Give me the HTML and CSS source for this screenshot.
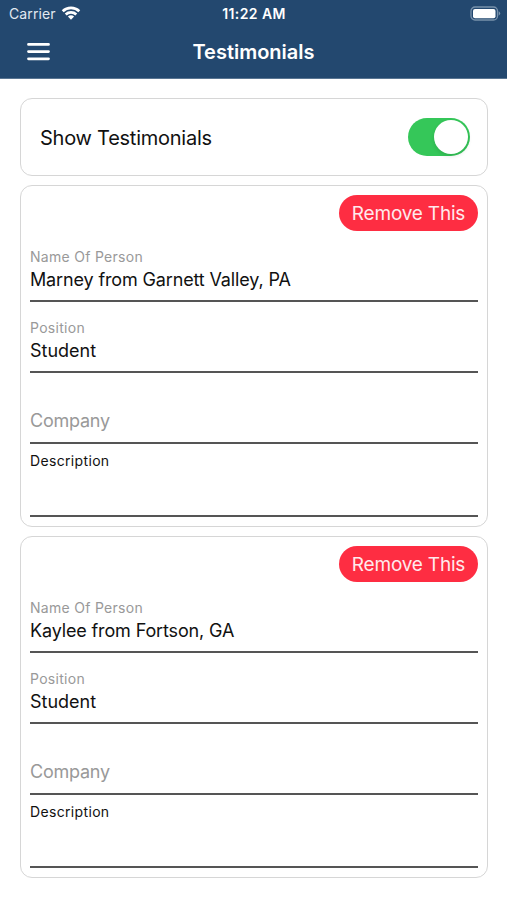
FILE: index.html
```html
<!DOCTYPE html>
<html lang="en">
<head>
<meta charset="utf-8">
<title>Testimonials</title>
<link rel="stylesheet" href="styles.css">
</head>
<body>
<header class="header">
  <div class="status">
    <div class="carrier"><span>Carrier</span>
      <svg class="wifi" width="20" height="14" viewBox="0 0 20 14"><g fill="none" stroke="#fff" stroke-width="2.7"><path d="M1.7 5.3a12 12 0 0 1 16.6 0"/><path d="M4.7 8.5a7.7 7.7 0 0 1 10.6 0"/></g><path fill="#fff" d="M10 13.7 6.9 10.6a4.5 4.5 0 0 1 6.2 0z"/></svg>
    </div>
    <span class="time">11:22 AM</span>
    <svg class="battery" width="31" height="15" viewBox="0 0 31 15"><rect x="1" y="1" width="26.5" height="13" rx="4" fill="none" stroke="#7891ab" stroke-width="1.3"/><rect x="3" y="3" width="22.5" height="9.3" rx="2" fill="#fff"/><path d="M28.7 5.3q3 2.2 0 4.4z" fill="#7e96af"/></svg>
  </div>
  <div class="nav">
    <svg class="menu" width="23" height="18" viewBox="0 0 23 18"><path d="M1.5 1.4h20M1.5 8.6h20M1.5 15.8h20" stroke="#fff" stroke-width="2.8" stroke-linecap="round"/></svg>
    <h1 class="title">Testimonials</h1>
  </div>
</header>
<main class="content">
  <section class="card toggle-card">
    <span class="toggle-label">Show Testimonials</span>
    <span class="switch"><span class="knob"></span></span>
  </section>
  <section class="card">
    <button class="remove">Remove This</button>
    <div class="field"><span class="label">Name Of Person</span><span class="value">Marney from Garnett Valley, PA</span></div>
    <div class="field"><span class="label">Position</span><span class="value short">Student</span></div>
    <div class="field"><span class="placeholder">Company</span></div>
    <div class="field description"><span class="description-label">Description</span></div>
  </section>
  <section class="card">
    <button class="remove">Remove This</button>
    <div class="field"><span class="label">Name Of Person</span><span class="value">Kaylee from Fortson, GA</span></div>
    <div class="field"><span class="label">Position</span><span class="value short">Student</span></div>
    <div class="field"><span class="placeholder">Company</span></div>
    <div class="field description"><span class="description-label">Description</span></div>
  </section>
</main>
</body>
</html>
```
FILE: styles.css
```css
* { box-sizing: border-box; }
body { margin: 0; height: 900px; background: #fff; color: #111; font-family: Inter, "Liberation Sans", sans-serif; overflow: hidden; white-space: nowrap; }
.header { height: 79px; background: #23486f; color: #fff; border-bottom: 1px solid #597592; }
.status { height: 27px; display: grid; grid-template-columns: 1fr auto 1fr; align-items: center; padding: 0 6px 0 9px; }
.carrier { display: flex; align-items: center; gap: 5px; font-size: 14px; letter-spacing: .1px; color: #e2e9f1; }
.wifi { margin-top: -2px; }
.time { font-size: 14px; font-weight: 600; letter-spacing: .4px; margin-right: 2px; }
.battery { justify-self: end; }
.nav { height: 51px; display: grid; grid-template-columns: 80px 1fr 80px; align-items: center; }
.menu { margin: 0 0 1px 27px; }
.title { margin: 0; text-align: center; font-size: 20px; line-height: 24px; font-weight: 600; margin-top: -1px; }
.content { padding: 19px 19px 0 20px; display: flex; flex-direction: column; gap: 9px; }
.card { height: 342px; border: 1px solid #d6d6d6; border-radius: 12px; padding: 9px; display: flex; flex-direction: column; }
.toggle-card { height: 78px; flex-direction: row; align-items: center; justify-content: space-between; padding: 0 17px 0 19px; }
.toggle-label { font-size: 20px; letter-spacing: -.25px; margin-top: 1px; }
.switch { width: 62px; height: 38px; border-radius: 19px; background: #35c759; padding: 2px; display: flex; justify-content: flex-end; }
.knob { width: 34px; height: 34px; border-radius: 50%; background: #fff; box-shadow: 0 2px 4px rgba(0,0,0,.12); }
.remove { align-self: flex-end; width: 139px; height: 36px; flex: none; border: 0; border-radius: 18px; padding: 0; background: #fe2d42; color: #ffe9ec; font: 19px Inter, "Liberation Sans", sans-serif; letter-spacing: -.2px; }
.field { height: 71px; flex: none; border-bottom: 2px solid #555; display: flex; flex-direction: column; align-items: flex-start; }
.label { margin-top: 17px; font-size: 14px; line-height: 18px; letter-spacing: .29px; color: #999; }
.value { margin-top: 1px; font-size: 18px; line-height: 26px; letter-spacing: -.14px; color: #111; }
.short { letter-spacing: 0; }
.placeholder { margin-top: 35px; font-size: 18px; line-height: 26px; letter-spacing: -.25px; color: #999; }
.description { height: 73px; }
.description-label { margin-top: 8px; font-size: 14px; line-height: 18px; letter-spacing: .34px; }
```
